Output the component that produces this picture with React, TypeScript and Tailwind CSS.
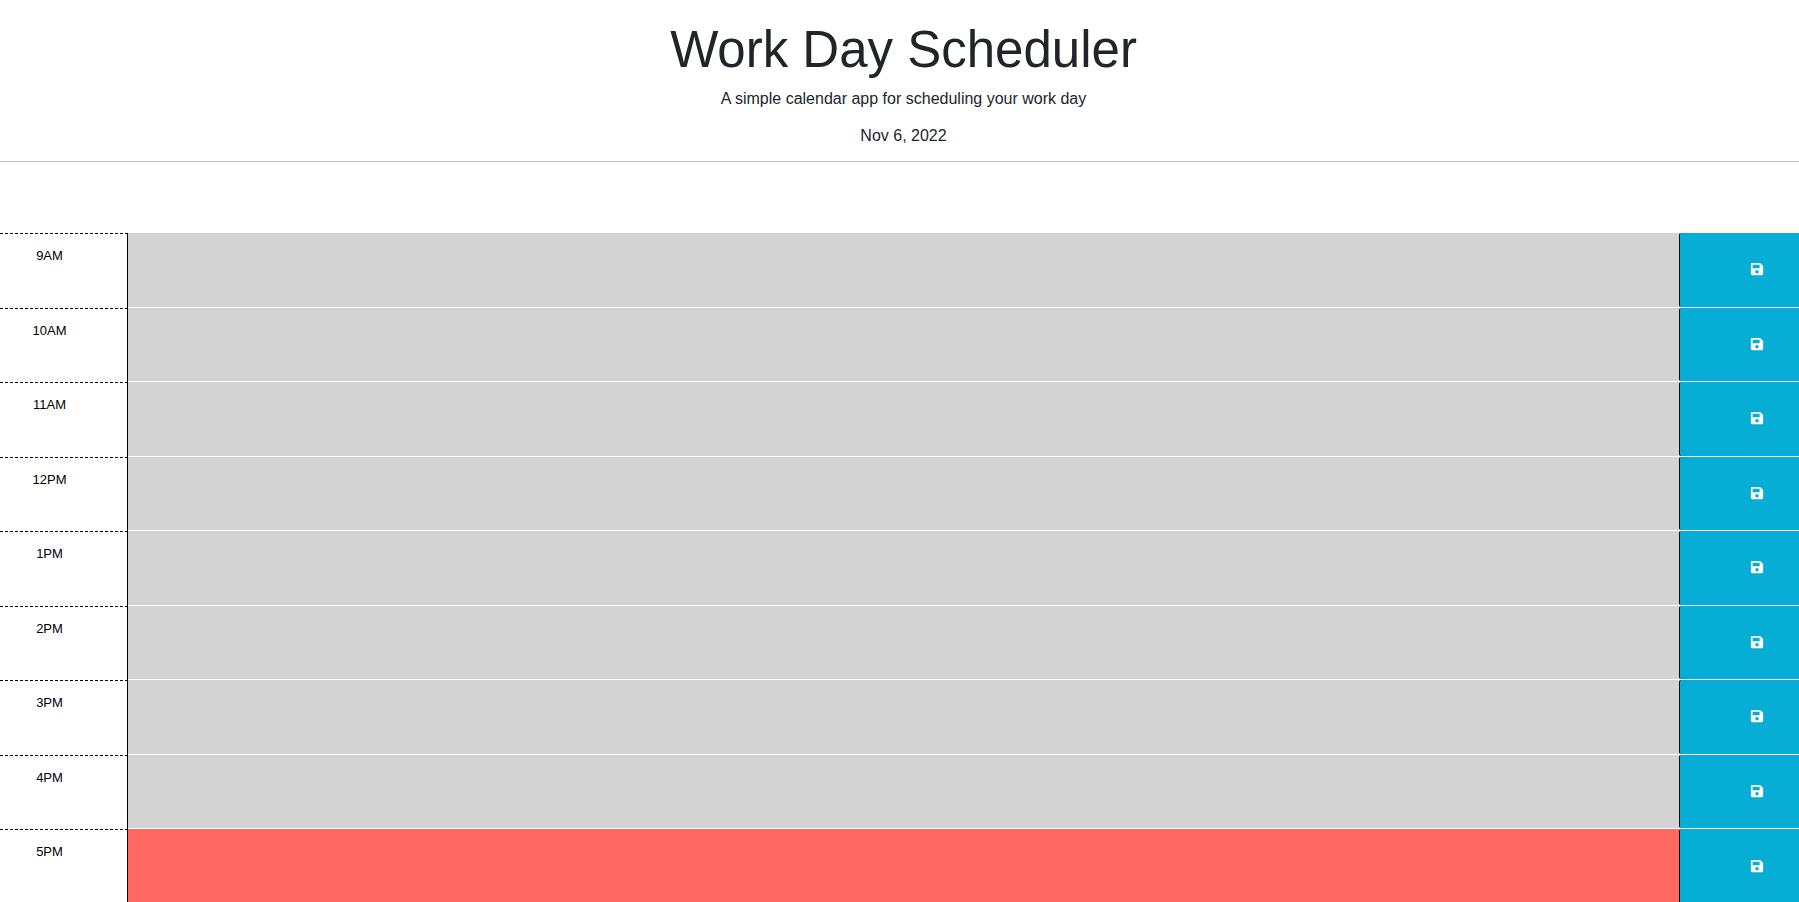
import { FaSave } from "react-icons/fa";

type Slot = { label: string; state: "past" | "present" };

const slots: Slot[] = [
  { label: "9AM", state: "past" },
  { label: "10AM", state: "past" },
  { label: "11AM", state: "past" },
  { label: "12PM", state: "past" },
  { label: "1PM", state: "past" },
  { label: "2PM", state: "past" },
  { label: "3PM", state: "past" },
  { label: "4PM", state: "past" },
  { label: "5PM", state: "present" },
];

const stateColors = {
  past: "bg-[#d3d3d3]",
  present: "bg-[#ff6961]",
};

function TimeBlock({ label, state }: Slot) {
  const id = `slot-${label}`;
  return (
    <li className="group flex odd:h-[75px] even:h-[74px] last:h-[73px]">
      <label
        htmlFor={id}
        className="w-32 shrink-0 border-t border-r border-t-black border-r-black [border-top-style:dashed] pt-3 pr-7 text-center text-[13px] leading-5 text-black"
      >
        {label}
      </label>
      <div className="flex min-w-0 flex-1 border-b border-white group-last:border-b-0">
        <textarea id={id} className={`min-w-0 flex-1 resize-none p-2 outline-none ${stateColors[state]}`} />
        <button
          type="button"
          aria-label={`Save ${label}`}
          className="flex w-[120px] shrink-0 items-center justify-center rounded-l-xs border-l border-black bg-[#06aed5] pb-0.5 pl-[34px] text-white"
        >
          <FaSave size={14} />
        </button>
      </div>
    </li>
  );
}

export default function App() {
  return (
    <div className="bg-white font-['Liberation_Sans',Arial,sans-serif] text-[#212529]">
      <header className="border-b border-[#c4c4c4] pt-5 pb-[13px] pl-2 text-center">
        <h1 className="mb-2 text-[51px] leading-[59px]">Work Day Scheduler</h1>
        <p className="mb-[13px] text-base">A simple calendar app for scheduling your work day</p>
        <p className="text-base">Nov 6, 2022</p>
      </header>
      <main className="pt-[71px]">
        <ul>
          {slots.map((slot) => (
            <TimeBlock key={slot.label} {...slot} />
          ))}
        </ul>
      </main>
    </div>
  );
}
